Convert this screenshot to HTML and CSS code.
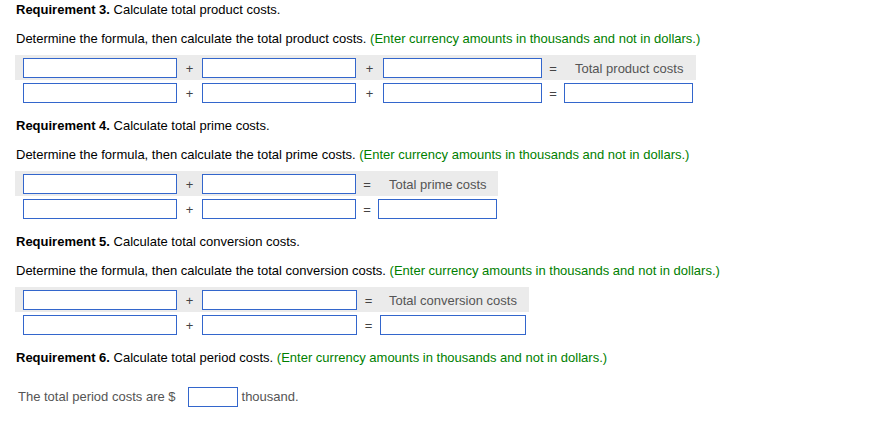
FILE: index.html
```html
<!DOCTYPE html>
<html>
<head>
<meta charset="utf-8">
<link rel="stylesheet" href="styles.css">
</head>
<body>
<div class="page">
  <section class="req">
    <p class="head"><b>Requirement 3.</b> Calculate total product costs.</p>
    <p class="desc">Determine the formula, then calculate the total product costs. <span class="note">(Enter currency amounts in thousands and not in dollars.)</span></p>
    <div class="formula">
      <div class="row band">
        <input class="box w154" type="text"><span class="op w25">+</span><input class="box w154" type="text"><span class="op w27">+</span><input class="box w159" type="text"><span class="op w22">=</span><span class="label w132">Total product costs</span>
      </div>
      <div class="row second">
        <input class="box w154" type="text"><span class="op w25">+</span><input class="box w154" type="text"><span class="op w27">+</span><input class="box w159" type="text"><span class="op w22">=</span><input class="box w129" type="text">
      </div>
    </div>
  </section>

  <section class="req">
    <p class="head"><b>Requirement 4.</b> Calculate total prime costs.</p>
    <p class="desc">Determine the formula, then calculate the total prime costs. <span class="note">(Enter currency amounts in thousands and not in dollars.)</span></p>
    <div class="formula">
      <div class="row band">
        <input class="box w154" type="text"><span class="op w25">+</span><input class="box w154" type="text"><span class="op w22">=</span><span class="label w120">Total prime costs</span>
      </div>
      <div class="row second">
        <input class="box w154" type="text"><span class="op w25">+</span><input class="box w154" type="text"><span class="op w22">=</span><input class="box w119" type="text">
      </div>
    </div>
  </section>

  <section class="req">
    <p class="head"><b>Requirement 5.</b> Calculate total conversion costs.</p>
    <p class="desc">Determine the formula, then calculate the total conversion costs. <span class="note">(Enter currency amounts in thousands and not in dollars.)</span></p>
    <div class="formula">
      <div class="row band">
        <input class="box w154" type="text"><span class="op w25">+</span><input class="box w155" type="text"><span class="op w23">=</span><span class="label w149 lab9">Total conversion costs</span>
      </div>
      <div class="row second">
        <input class="box w154" type="text"><span class="op w25">+</span><input class="box w155" type="text"><span class="op w23">=</span><input class="box w146" type="text">
      </div>
    </div>
  </section>

  <section class="req">
    <p class="head"><b>Requirement 6.</b> Calculate total period costs. <span class="note">(Enter currency amounts in thousands and not in dollars.)</span></p>
    <div class="period">
      <span>The total period costs are $</span><input class="box w50 pbox" type="text"><span>thousand.</span>
    </div>
  </section>
</div>
</body>
</html>
```

FILE: styles.css
```css
html, body {
  margin: 0;
  padding: 0;
  background: #ffffff;
}

body {
  font-family: "Liberation Sans", Arial, sans-serif;
  font-size: 13px;
  line-height: 16px;
  color: #000000;
}

.page {
  padding: 2px 0 0 15px;
}

.req {
  margin: 0 0 12px 0;
}

.head {
  margin: 0 0 13px 1px;
  height: 16px;
  white-space: nowrap;
}

.head b {
  font-weight: bold;
}

.desc {
  margin: 0 0 8px 1px;
  height: 16px;
  white-space: nowrap;
}

.note {
  color: #008000;
}

.formula {
  display: flex;
  flex-direction: column;
  align-items: flex-start;
}

.row {
  display: flex;
  align-items: flex-start;
  padding-left: 8px;
  height: 25px;
}

.row.second {
  height: 26px;
}

.band {
  background: #ebebeb;
}

.box {
  box-sizing: border-box;
  height: 20px;
  margin: 3px 0 0 0;
  padding: 0 3px;
  border: 1px solid #3366cc;
  background: #ffffff;
  font-family: "Liberation Sans", Arial, sans-serif;
  font-size: 13px;
  outline: none;
  border-radius: 0;
}

.op {
  display: block;
  text-align: center;
  color: #444444;
  line-height: 25px;
  padding-top: 1px;
  height: 24px;
}

.label {
  display: block;
  color: #555555;
  line-height: 25px;
  padding-top: 1px;
  height: 24px;
  box-sizing: border-box;
  padding-left: 11px;
  white-space: nowrap;
}

.label.lab9 {
  padding-left: 9px;
}

.w22 { width: 22px; }
.w23 { width: 23px; }
.w25 { width: 25px; }
.w27 { width: 27px; }
.w50 { width: 50px; }
.w119 { width: 119px; }
.w120 { width: 120px; }
.w129 { width: 129px; }
.w132 { width: 132px; }
.w146 { width: 146px; }
.w149 { width: 149px; }
.w154 { width: 154px; }
.w155 { width: 155px; }
.w159 { width: 159px; }

.period {
  display: flex;
  align-items: center;
  margin: 21px 0 0 3px;
  height: 20px;
  color: #555555;
  white-space: nowrap;
}

.period .pbox {
  margin: 0 4px 0 12px;
}
```
